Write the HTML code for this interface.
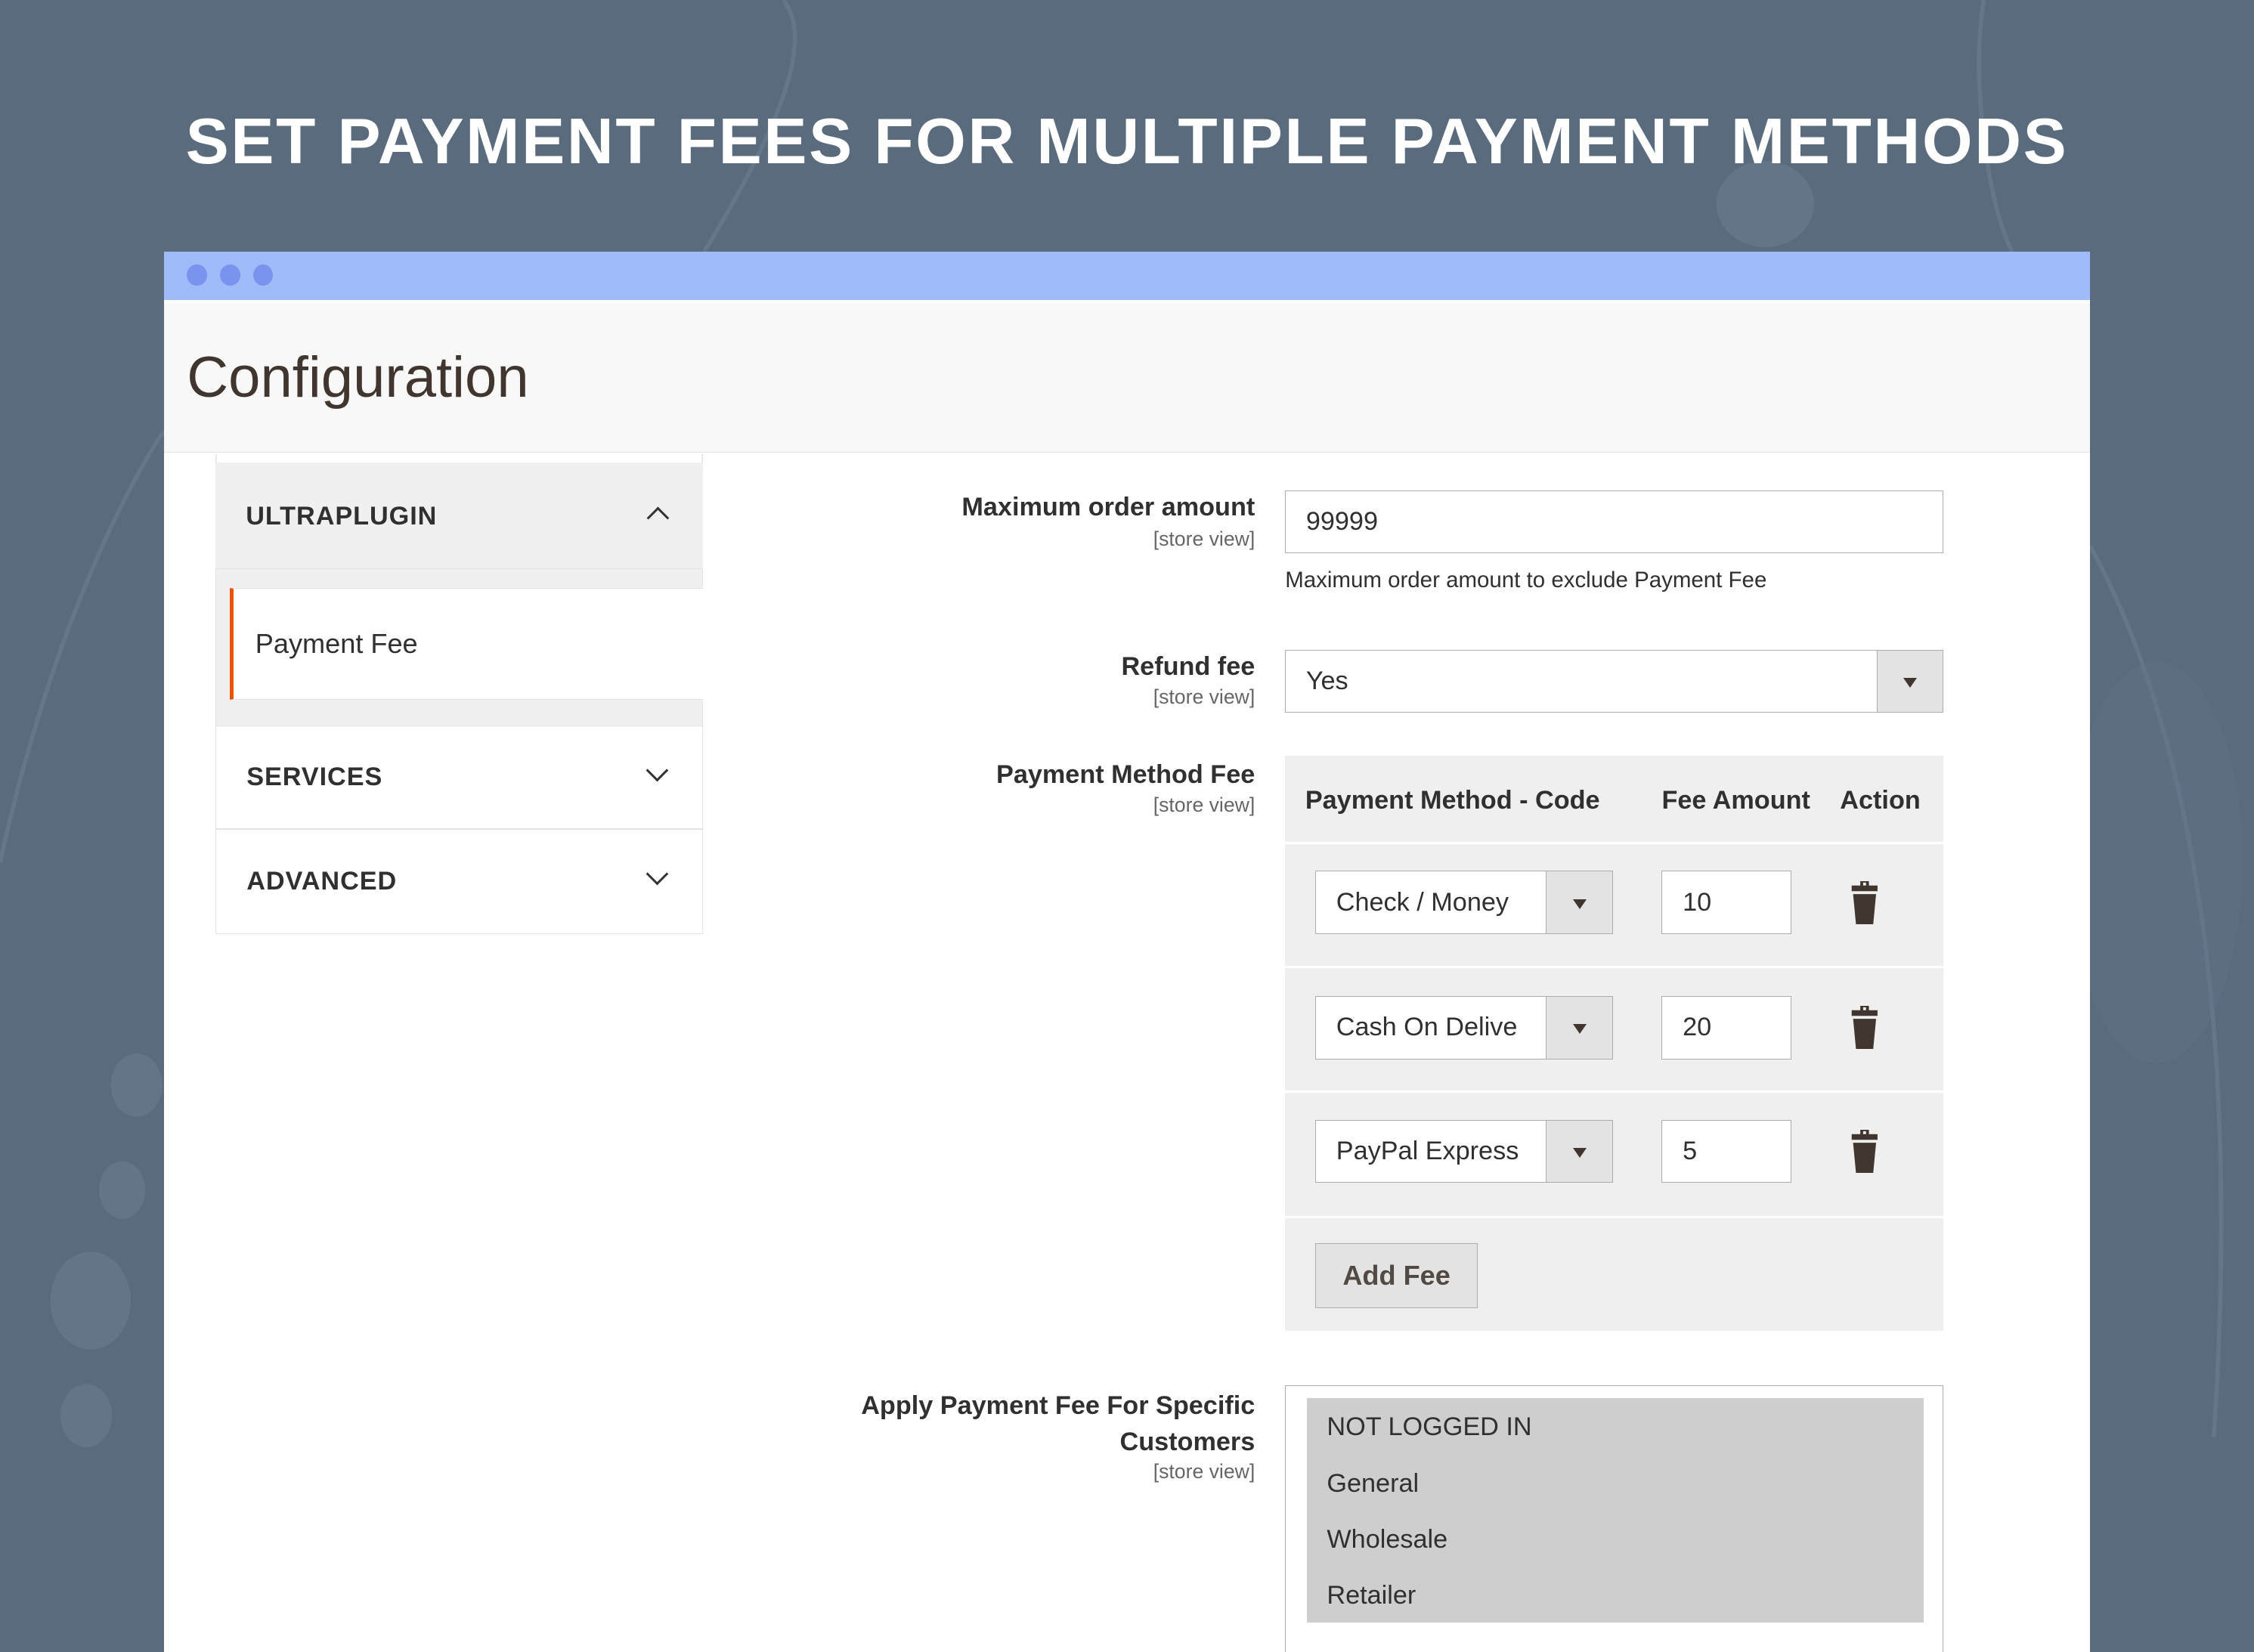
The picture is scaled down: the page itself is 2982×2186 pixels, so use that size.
<!DOCTYPE html>
<html><head><meta charset="utf-8"><style>
*{box-sizing:border-box;margin:0;padding:0}
html,body{width:2982px;height:2186px;overflow:hidden;background:#5b6b7e}
#z{zoom:1.9018;width:1568px;height:1150px;position:relative;font-family:"Liberation Sans",sans-serif;color:#303030;overflow:hidden}
.a{position:absolute}
.title{left:0;width:1568px;top:73px;text-align:center;color:#fff;font-weight:bold;font-size:45px;letter-spacing:1.4px}
.lbl{right:695px;text-align:right;font-weight:bold;font-size:18px;color:#303030}
.sv{right:695px;font-size:14px;color:#666}
.inp{background:#fff;border:1px solid #adadad;font-size:18px;padding-left:14px;display:flex;align-items:center}
.arrow{position:absolute;right:0;top:0;bottom:0;width:46px;background:#e3e3e3;border-left:1px solid #adadad}
.arrow:after{content:"";position:absolute;left:18px;top:19px;border-left:5px solid transparent;border-right:5px solid transparent;border-top:7px solid #41362f}
.sec{left:150px;width:339px;font-weight:bold;font-size:18px;letter-spacing:.5px;padding-left:21px;display:flex;align-items:center;color:#303030}
.chev{position:absolute;right:26px;width:11px;height:11px;border-right:2px solid #333;border-bottom:2px solid #333}
.row{left:894px;width:458px;height:85px;border-top:2px solid #fff}
.ms{left:909px;width:429px;font-size:18px;padding-left:14px}
</style></head><body><div id="z">
<svg class="a" style="left:0;top:0" width="1568" height="1150">
<g fill="none" stroke="#6a7b90" stroke-width="3" opacity=".7">
<path d="M490 175 C560 60 560 20 545 0"/>
<path d="M0 600 C40 420 100 320 114 300"/>
<path d="M1380 0 C1370 60 1385 150 1400 175"/>
<path d="M1454 380 C1520 500 1560 700 1540 1000"/>
</g>
<ellipse cx="1228" cy="142" rx="34" ry="30" fill="#6a7b90" opacity=".6"/>
<ellipse cx="95" cy="755" rx="18" ry="22" fill="#6a7b90" opacity=".6"/>
<ellipse cx="85" cy="828" rx="16" ry="20" fill="#6a7b90" opacity=".6"/>
<ellipse cx="63" cy="905" rx="28" ry="34" fill="#6a7b90" opacity=".6"/>
<ellipse cx="60" cy="985" rx="18" ry="22" fill="#6a7b90" opacity=".6"/>
<ellipse cx="1500" cy="600" rx="60" ry="140" fill="#63748a" opacity=".3"/>
</svg>
<div class="a title">SET PAYMENT FEES FOR MULTIPLE PAYMENT METHODS</div>
<div class="a" style="left:114px;top:175px;width:1340px;height:980px;background:#fff"></div>
<div class="a" style="left:114px;top:175px;width:1340px;height:34px;background:#a0bbfa"></div>
<div class="a" style="left:130px;top:184px;width:14px;height:15px;border-radius:50%;background:#7a93ee"></div>
<div class="a" style="left:153px;top:184px;width:14px;height:15px;border-radius:50%;background:#7a93ee"></div>
<div class="a" style="left:176px;top:184px;width:14px;height:15px;border-radius:50%;background:#7a93ee"></div>
<div class="a" style="left:114px;top:211px;width:1340px;height:104px;background:#f8f8f8;border-bottom:1px solid #e3e3e3"></div>
<div class="a" style="left:130px;top:240px;font-size:40px;color:#41362f">Configuration</div>
<div class="a" style="left:150px;top:316px;width:339px;height:334px;border:1px solid #e3e3e3;background:#f0f0f0"></div>
<div class="a" style="left:151px;top:316px;width:337px;height:6px;background:#fff"></div>
<div class="a sec" style="top:323px;height:73px;background:#f0f0f0;border-bottom:1px solid #e3e3e3">ULTRAPLUGIN<span class="chev" style="transform:rotate(-135deg);top:32px"></span></div>
<div class="a" style="left:160px;top:409px;width:329px;height:78px;background:#fff;border-left:3px solid #eb5202;border-top:1px solid #e3e3e3;border-bottom:1px solid #e3e3e3;font-size:19px;padding-left:15px;display:flex;align-items:center">Payment Fee</div>
<div class="a sec" style="top:505px;height:72px;background:#fff;border:1px solid #e3e3e3">SERVICES<span class="chev" style="transform:rotate(45deg);top:25px"></span></div>
<div class="a sec" style="top:577px;height:73px;background:#fff;border:1px solid #e3e3e3">ADVANCED<span class="chev" style="transform:rotate(45deg);top:25px"></span></div>
<div class="a lbl" style="top:343px">Maximum order amount</div>
<div class="a sv" style="top:367px">[store view]</div>
<div class="a inp" style="left:894px;top:341px;width:458px;height:44px">99999</div>
<div class="a" style="left:894px;top:395px;font-size:15.5px">Maximum order amount to exclude Payment Fee</div>
<div class="a lbl" style="top:454px">Refund fee</div>
<div class="a sv" style="top:477px">[store view]</div>
<div class="a inp" style="left:894px;top:452px;width:458px;height:44px">Yes<span class="arrow" style="background:#e3e3e3"></span></div>
<div class="a lbl" style="top:529px">Payment Method Fee</div>
<div class="a sv" style="top:552px">[store view]</div>
<div class="a" style="left:894px;top:526px;width:458px;height:400px;background:#efefef"></div>
<div class="a" style="left:908px;top:547px;font-weight:bold;font-size:18px">Payment Method - Code</div>
<div class="a" style="left:1156px;top:547px;font-weight:bold;font-size:18px">Fee Amount</div>
<div class="a" style="left:1280px;top:547px;font-weight:bold;font-size:18px">Action</div>
<div class="a row" style="top:586px"></div>
<div class="a row" style="top:672px"></div>
<div class="a row" style="top:759px"></div>
<div class="a row" style="top:846px"></div>
<div class="a inp" style="left:915px;top:606px;width:207px;height:44px">Check / Money<span class="arrow"></span></div>
<div class="a inp" style="left:915px;top:693px;width:207px;height:44px;white-space:nowrap;overflow:hidden">Cash On Delive<span class="arrow"></span></div>
<div class="a inp" style="left:915px;top:779px;width:207px;height:44px">PayPal Express<span class="arrow"></span></div>
<div class="a inp" style="left:1156px;top:606px;width:90px;height:44px">10</div>
<div class="a inp" style="left:1156px;top:693px;width:90px;height:44px">20</div>
<div class="a inp" style="left:1156px;top:779px;width:90px;height:44px">5</div>
<svg class="a" style="left:1285px;top:613px" width="24" height="30" viewBox="0 0 24 30"><path fill="#41362f" d="M9 0h6v3h6v4H3V3h6zM11 1v2h2V1zM4 9h16l-2 21H6z"/></svg>
<svg class="a" style="left:1285px;top:700px" width="24" height="30" viewBox="0 0 24 30"><path fill="#41362f" d="M9 0h6v3h6v4H3V3h6zM11 1v2h2V1zM4 9h16l-2 21H6z"/></svg>
<svg class="a" style="left:1285px;top:786px" width="24" height="30" viewBox="0 0 24 30"><path fill="#41362f" d="M9 0h6v3h6v4H3V3h6zM11 1v2h2V1zM4 9h16l-2 21H6z"/></svg>
<div class="a" style="left:915px;top:865px;width:113px;height:45px;background:#e3e3e3;border:1px solid #adadad;font-size:19px;font-weight:bold;color:#514943;display:flex;align-items:center;justify-content:center">Add Fee</div>
<div class="a lbl" style="top:966px;line-height:25px">Apply Payment Fee For Specific<br>Customers</div>
<div class="a sv" style="top:1016px">[store view]</div>
<div class="a" style="left:894px;top:964px;width:458px;height:200px;border:1px solid #adadad;background:#fff"></div>
<div class="a" style="left:909px;top:973px;width:429px;height:156px;background:#cecece"></div>
<div class="a ms" style="top:983px">NOT LOGGED IN</div>
<div class="a ms" style="top:1022px">General</div>
<div class="a ms" style="top:1061px">Wholesale</div>
<div class="a ms" style="top:1100px">Retailer</div>
</div></body></html>
